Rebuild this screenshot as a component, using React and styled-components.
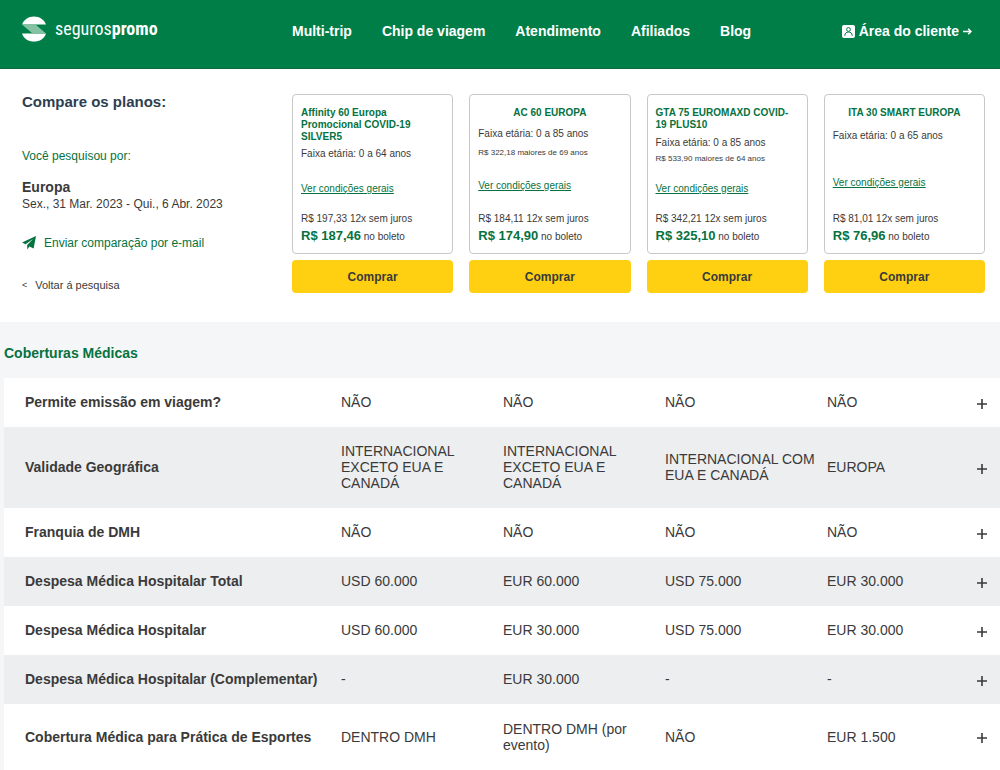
import styled, { createGlobalStyle } from "styled-components";

const GlobalStyle = createGlobalStyle`
  * {
    box-sizing: border-box;
  }
  body {
    margin: 0;
    background: #f5f6f8;
    color: #3a3a3a;
    font-family: "Liberation Sans", Arial, sans-serif;
  }
  a {
    color: inherit;
    text-decoration: none;
  }
  h1,
  h2,
  h3,
  p {
    margin: 0;
  }
`;

const Header = styled.header`
  display: flex;
  align-items: center;
  height: 69px;
  padding: 0 28px 6px 22px;
  background: #007e47;
  border-bottom: 1px solid #0b6b3a;
  color: white;
`;
const Brand = styled.a`
  display: flex;
  align-items: center;
  gap: 9px;
  flex: 0 0 270px;
  padding-bottom: 4px;
`;
const BrandName = styled.span`
  font-family: "Roboto Condensed", "Liberation Sans Narrow", "Open Sans Condensed",
    "Liberation Sans", sans-serif;
  font-size: 18px;
  line-height: 24px;
`;
const Nav = styled.nav`
  display: flex;
  gap: 30px;
  flex: 1;
`;
const NavLink = styled.a`
  font-size: 14px;
  font-weight: 700;
  line-height: 16px;
  white-space: nowrap;
`;
const ClientLink = styled(NavLink)`
  display: flex;
  align-items: center;
  gap: 4px;
`;

const Compare = styled.section`
  display: flex;
  padding: 25px 15px 29px 22px;
  background: white;
`;
const Search = styled.div`
  display: flex;
  flex-direction: column;
  align-items: flex-start;
  flex: 0 0 270px;
`;
const Title = styled.h1`
  font-size: 15px;
  line-height: 16px;
  color: #2d3e50;
`;
const SearchLabel = styled.p`
  margin-top: 38px;
  font-size: 12px;
  line-height: 16px;
  color: #067240;
`;
const Destination = styled.h2`
  margin-top: 15px;
  font-size: 14px;
  line-height: 16px;
`;
const Dates = styled.p`
  font-size: 12px;
  line-height: 18px;
`;
const SendLink = styled.a`
  display: flex;
  align-items: center;
  gap: 8px;
  margin-top: 22px;
  font-size: 12px;
  line-height: 16px;
  color: #067240;
`;
const BackLink = styled.a`
  display: flex;
  gap: 8px;
  margin-top: 28px;
  font-size: 11px;
  line-height: 12px;
`;
const Chevron = styled.span`
  font-size: 9px;
`;

const Plans = styled.div`
  display: grid;
  grid-template-columns: repeat(4, 1fr);
  gap: 16px;
  flex: 1;
`;
const Plan = styled.article`
  display: flex;
  flex-direction: column;
  gap: 6px;
`;
const Card = styled.div`
  padding: 12px 8px 8px;
  border: 1px solid #c8c8c8;
  border-radius: 4px;
  font-size: 10px;
  line-height: 12px;
`;
const Details = styled.div`
  display: flex;
  flex-direction: column;
  height: 93px;
`;
const PlanName = styled.h3`
  align-self: ${(p) => (p.$center ? "center" : "flex-start")};
  font-size: 10px;
  line-height: 12px;
  color: #067240;
`;
const Info = styled.div`
  display: flex;
  flex-direction: column;
  justify-content: space-evenly;
  align-items: flex-start;
  flex: 1;
`;
const Extra = styled.p`
  font-size: 8px;
  line-height: 10px;
`;
const Terms = styled.a`
  margin-top: 13px;
  color: #067240;
  text-decoration: underline;
`;
const Installments = styled.p`
  margin-top: 13px;
`;
const Price = styled.p`
  margin-top: 2px;
  line-height: 17px;
`;
const Amount = styled.strong`
  font-size: 13px;
  color: #067240;
`;
const Buy = styled.button`
  height: 33px;
  border: 0;
  border-radius: 4px;
  background: #ffd012;
  color: #3a3a3a;
  font-family: inherit;
  font-size: 12px;
  font-weight: 700;
  cursor: pointer;
`;

const Coverage = styled.section`
  padding: 22px 0 0 4px;
`;
const CoverageTitle = styled.h2`
  font-size: 14px;
  line-height: 18px;
  color: #067240;
`;
const Table = styled.table`
  width: 100%;
  margin-top: 16px;
  border-collapse: collapse;
  table-layout: fixed;
`;
const Row = styled.tr`
  background: white;
  &:nth-child(even) {
    background: #edeef0;
  }
  &:last-child {
    height: 66px;
  }
`;
const RowName = styled.th`
  width: 329px;
  padding: 16px 0 17px 21px;
  font-size: 14px;
  line-height: 16px;
  text-align: left;
`;
const Cell = styled.td`
  padding: 16px 0 17px 8px;
  font-size: 14px;
  line-height: 16px;
`;
const ToggleCell = styled.td`
  width: 19px;
  padding: 2px 0 0;
`;
const Toggle = styled.button`
  display: flex;
  justify-content: flex-start;
  margin-left: -4px;
  padding: 0;
  border: 0;
  background: none;
  color: #3a3a3a;
  cursor: pointer;
`;

const links = ["Multi-trip", "Chip de viagem", "Atendimento", "Afiliados", "Blog"];

const plans = [
  {
    name: "Affinity 60 Europa Promocional COVID-19 SILVER5",
    age: "0 a 64 anos",
    card: "R$ 197,33",
    price: "R$ 187,46",
  },
  {
    name: "AC 60 EUROPA",
    center: true,
    age: "0 a 85 anos",
    extra: "R$ 322,18 maiores de 69 anos",
    card: "R$ 184,11",
    price: "R$ 174,90",
  },
  {
    name: "GTA 75 EUROMAXD COVID-19 PLUS10",
    age: "0 a 85 anos",
    extra: "R$ 533,90 maiores de 64 anos",
    card: "R$ 342,21",
    price: "R$ 325,10",
  },
  {
    name: "ITA 30 SMART EUROPA",
    center: true,
    age: "0 a 65 anos",
    card: "R$ 81,01",
    price: "R$ 76,96",
  },
];

const rows = [
  ["Permite emissão em viagem?", "NÃO", "NÃO", "NÃO", "NÃO"],
  [
    "Validade Geográfica",
    "INTERNACIONAL EXCETO EUA E CANADÁ",
    "INTERNACIONAL EXCETO EUA E CANADÁ",
    "INTERNACIONAL COM EUA E CANADÁ",
    "EUROPA",
  ],
  ["Franquia de DMH", "NÃO", "NÃO", "NÃO", "NÃO"],
  ["Despesa Médica Hospitalar Total", "USD 60.000", "EUR 60.000", "USD 75.000", "EUR 30.000"],
  ["Despesa Médica Hospitalar", "USD 60.000", "EUR 30.000", "USD 75.000", "EUR 30.000"],
  ["Despesa Médica Hospitalar (Complementar)", "-", "EUR 30.000", "-", "-"],
  [
    "Cobertura Médica para Prática de Esportes",
    "DENTRO DMH",
    "DENTRO DMH (por evento)",
    "NÃO",
    "EUR 1.500",
  ],
];

const Logo = () => (
  <svg width="24" height="26" viewBox="0 0 24 26">
    <path d="M0 8.6C1.6 3.6 6.4.4 12 .4s10.400 3.200 12 8.200z" fill="#fff" />
    <path d="M0 17.400c1.600 5 6.400 8.200 12 8.200s10.400-3.200 12-8.200z" fill="#fff" />
    <path d="M0 8.600h13.500L24 17.400H10.500z" fill="#84c2a4" />
  </svg>
);

const UserIcon = () => (
  <svg width="13" height="13" viewBox="0 0 13 13">
    <rect width="13" height="13" rx="2" fill="#fff" />
    <g fill="none" stroke="#007e47" strokeWidth="1">
      <circle cx="6.5" cy="4.5" r="1.900" />
      <path d="M2.800 11v-.6C2.800 8.400 4.400 7 6.500 7s3.700 1.400 3.700 3.400v.6" />
    </g>
  </svg>
);

const ArrowIcon = () => (
  <svg width="9" height="8" viewBox="0 0 9 8" fill="none" stroke="#fff" strokeWidth="1.5">
    <path d="M0 4.500h8M5.200 1.700 8 4.500 5.200 7.300" />
  </svg>
);

const PlaneIcon = () => (
  <svg width="14" height="14" viewBox="0 0 14 14" fill="#067240">
    <path d="M14 0 0 6.600 3.600 8.200 11 3 5.200 9v4.600L7.400 10.600 11.600 12.600z" />
  </svg>
);

const PlusIcon = () => (
  <svg width="10" height="10" viewBox="0 0 10 10" stroke="currentColor" strokeWidth="1.600">
    <path d="M5 0v10M0 5h10" />
  </svg>
);

const App = () => (
  <>
    <GlobalStyle />
    <Header>
      <Brand href="#">
        <Logo />
        <BrandName>
          seguros<b>promo</b>
        </BrandName>
      </Brand>
      <Nav>
        {links.map((link) => (
          <NavLink href="#" key={link}>
            {link}
          </NavLink>
        ))}
      </Nav>
      <ClientLink href="#">
        <UserIcon />
        Área do cliente
        <ArrowIcon />
      </ClientLink>
    </Header>
    <Compare>
      <Search>
        <Title>Compare os planos:</Title>
        <SearchLabel>Você pesquisou por:</SearchLabel>
        <Destination>Europa</Destination>
        <Dates>Sex., 31 Mar. 2023 - Qui., 6 Abr. 2023</Dates>
        <SendLink href="#">
          <PlaneIcon />
          Enviar comparação por e-mail
        </SendLink>
        <BackLink href="#">
          <Chevron>&lt;</Chevron>
          Voltar á pesquisa
        </BackLink>
      </Search>
      <Plans>
        {plans.map((plan) => (
          <Plan key={plan.name}>
            <Card>
              <Details>
                <PlanName $center={plan.center}>{plan.name}</PlanName>
                <Info>
                  <p>Faixa etária: {plan.age}</p>
                  <Extra>{plan.extra}</Extra>
                  <Terms href="#">Ver condições gerais</Terms>
                </Info>
              </Details>
              <Installments>{plan.card} 12x sem juros</Installments>
              <Price>
                <Amount>{plan.price}</Amount> no boleto
              </Price>
            </Card>
            <Buy type="button">Comprar</Buy>
          </Plan>
        ))}
      </Plans>
    </Compare>
    <Coverage>
      <CoverageTitle>Coberturas Médicas</CoverageTitle>
      <Table>
        <tbody>
          {rows.map(([name, ...values]) => (
            <Row key={name}>
              <RowName scope="row">{name}</RowName>
              {values.map((value, i) => (
                <Cell key={i}>{value}</Cell>
              ))}
              <ToggleCell>
                <Toggle type="button" aria-label={name}>
                  <PlusIcon />
                </Toggle>
              </ToggleCell>
            </Row>
          ))}
        </tbody>
      </Table>
    </Coverage>
  </>
);

export default App;
